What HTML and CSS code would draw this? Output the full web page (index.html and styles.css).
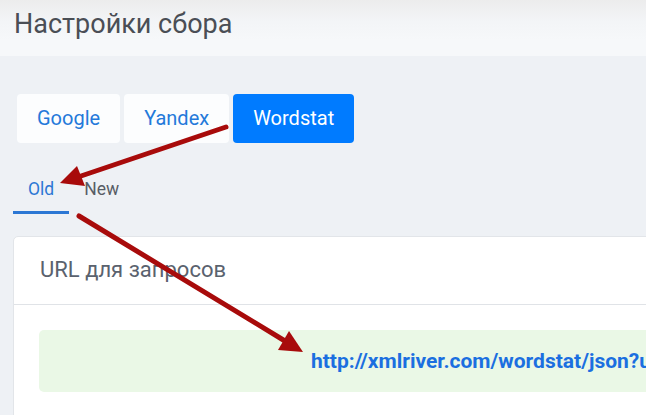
FILE: index.html
```html
<!DOCTYPE html>
<html lang="ru">
<head>
<meta charset="utf-8">
<title>Настройки сбора</title>
<link rel="stylesheet" href="styles.css">
</head>
<body>
<div class="page">
  <header class="page-header">
    <h1 class="page-title">Настройки сбора</h1>
  </header>
  <main class="content">
    <div class="engine-tabs">
      <button class="engine-btn">Google</button>
      <button class="engine-btn">Yandex</button>
      <button class="engine-btn active">Wordstat</button>
    </div>
    <nav class="sub-tabs">
      <a class="sub-tab active">Old</a>
      <a class="sub-tab">New</a>
    </nav>
    <section class="card">
      <div class="card-header">URL для запросов</div>
      <div class="card-body">
        <div class="url-box">
          <a class="url-link">http://xmlriver.com/wordstat/json?user=XXXX&amp;key=XXXXXXXX&amp;query=</a>
        </div>
      </div>
    </section>
  </main>
  <svg class="arrows" width="646" height="415" viewBox="0 0 646 415">
    <line x1="226" y1="127" x2="81" y2="176" stroke="#a80b0b" stroke-width="5" stroke-linecap="round"/>
    <polygon points="60,183 77,166 85,186" fill="#a80b0b"/>
    <line x1="79" y1="216" x2="285" y2="341" stroke="#a80b0b" stroke-width="5" stroke-linecap="round"/>
    <polygon points="303,352 289,331 278,350" fill="#a80b0b"/>
  </svg>
</div>
</body>
</html>
```

FILE: styles.css
```css
html, body {
  margin: 0;
  padding: 0;
  overflow: hidden;
}
body {
  font-family: Roboto, "Noto Sans", "Liberation Sans", sans-serif;
  background: #eef1f5;
}
.page {
  position: relative;
  width: 646px;
  height: 415px;
  overflow: hidden;
  background: #eef1f5;
}
.page-header {
  height: 56px;
  box-sizing: border-box;
  padding: 9px 14px 0;
  background: linear-gradient(to bottom, #ececec 0px, #f3f5f7 22px, #f6f8fa 40px, #f6f8fa 56px);
}
.page-title {
  margin: 0;
  font-size: 27px;
  line-height: 30px;
  font-weight: 400;
  color: #4a4e55;
}
.content {
  padding: 38px 0 0 13px;
}
.engine-tabs {
  display: flex;
  gap: 4px;
  margin-left: 4px;
}
.engine-btn {
  font-family: inherit;
  font-size: 20px;
  line-height: 31px;
  padding: 9px 20px;
  border: none;
  border-radius: 4px;
  background: #fcfdfe;
  color: #2479da;
}
.engine-btn.active {
  background: #007bff;
  color: #ffffff;
}
.sub-tabs {
  display: flex;
  margin-top: 24px;
}
.sub-tab {
  font-size: 17.5px;
  line-height: 24px;
  padding: 10px 15px 10px;
  border-bottom: 3px solid transparent;
  color: #585d65;
}
.sub-tab.active {
  color: #2c77d4;
  border-bottom-color: #2c77d4;
}
.card {
  margin-top: 22px;
  margin-right: -60px;
  background: #ffffff;
  border: 1px solid #e2e5e9;
  border-radius: 5px;
  height: 400px;
}
.card-header {
  height: 68px;
  box-sizing: border-box;
  padding: 20px 26px 0;
  font-size: 22px;
  line-height: 26px;
  color: #5a626e;
  border-bottom: 1px solid #e0e3e7;
}
.card-body {
  padding: 25px 0 0 25px;
}
.url-box {
  height: 62px;
  box-sizing: border-box;
  background: #eaf8e6;
  border-radius: 5px;
  padding: 0 0 0 272px;
  display: flex;
  align-items: center;
  white-space: nowrap;
  overflow: hidden;
}
.url-link {
  font-size: 21px;
  font-weight: 700;
  color: #1b6fe0;
}
.arrows {
  position: absolute;
  top: 0;
  left: 0;
  pointer-events: none;
}
```
